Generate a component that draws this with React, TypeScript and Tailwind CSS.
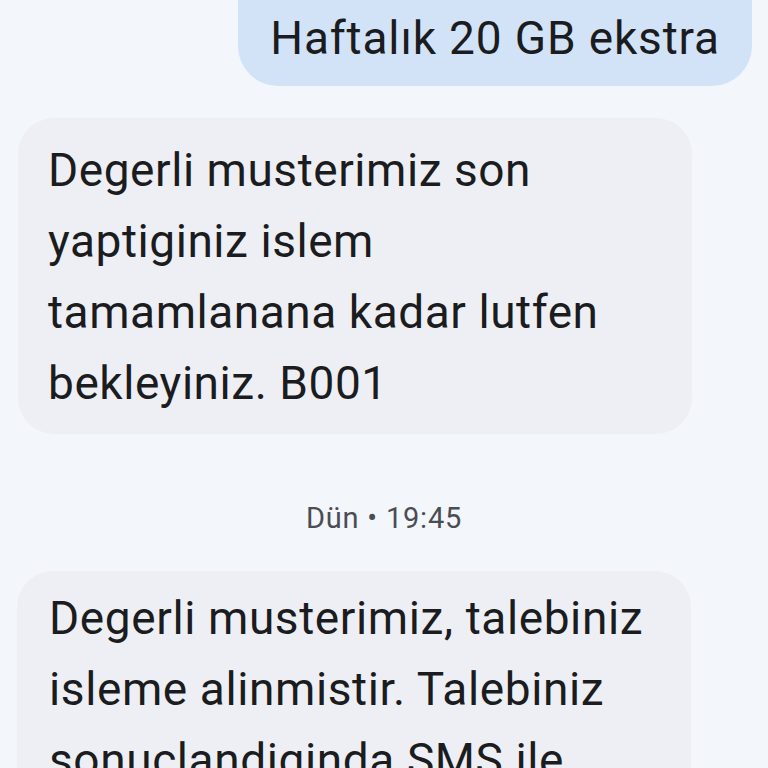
export default function App() {
  return (
    <main
      className="h-[768px] w-[768px] overflow-hidden bg-[#f3f6fb] text-[#1b1c20]"
      style={{ fontFamily: "Roboto, 'Noto Sans', sans-serif" }}
    >
      <div className="flex justify-end pr-4">
        <div className="mt-[-40px] rounded-[40px] bg-[#d3e3f7] px-8 pb-[20px] pt-[50px] text-[46px] leading-[56px] tracking-[0.85px]">
          Haftalık 20 GB ekstra
        </div>
      </div>

      <div className="mt-[32px] pl-[18px]">
        <div className="w-[674px] rounded-[36px] bg-[#eeeff4] px-[30px] pb-[15px] pt-[17px] text-[46px] leading-[71px] tracking-[0.55px]">
          Degerli musterimiz son<br />
          yaptiginiz islem<br />
          tamamlanana kadar lutfen<br />
          bekleyiniz. B001
        </div>
      </div>

      <p className="mt-[67px] text-center text-[29px] leading-[34px] tracking-[0.8px] text-[#4a4d52]">Dün • 19:45</p>

      <div className="mt-[36px] pl-[17px]">
        <div className="w-[674px] rounded-[36px] bg-[#eeeff4] px-[32px] pb-[14px] pt-[12px] text-[46px] leading-[71px] tracking-[0.6px]">
          Degerli musterimiz, talebiniz<br />
          isleme alinmistir. Talebiniz<br />
          sonuclandiginda SMS ile<br />
          bilgilendirileceksiniz.
        </div>
      </div>
    </main>
  );
}
